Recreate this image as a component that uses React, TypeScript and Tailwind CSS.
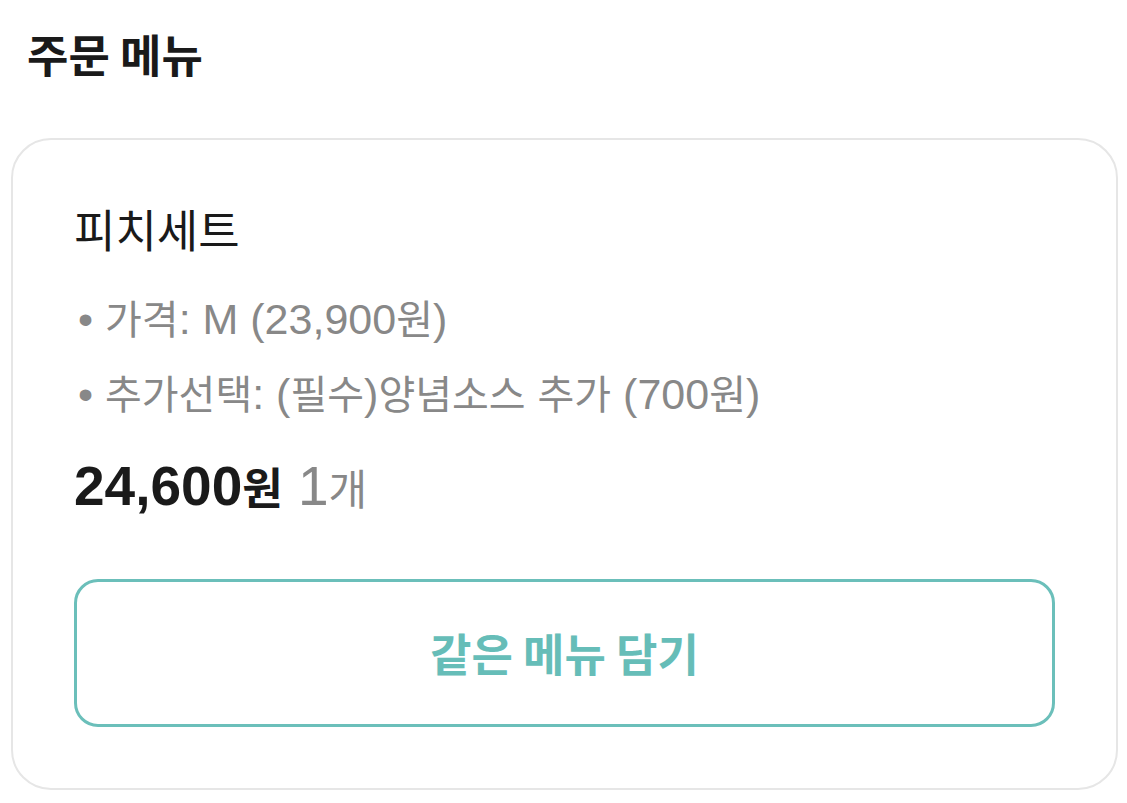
type MixedProps = { text: string; hangul: string; latin: string };

function Mixed({ text, hangul, latin }: MixedProps) {
  const parts = text.split(/([\uAC00-\uD7A3]+)/).filter((p) => p.length > 0);
  return (
    <>
      {parts.map((p, i) =>
        /[\uAC00-\uD7A3]/.test(p) ? (
          <span key={i} className={hangul}>
            {p}
          </span>
        ) : (
          <span key={i} className={latin}>
            {p}
          </span>
        )
      )}
    </>
  );
}

export default function App() {
  const hangulGray = "font-['Noto_Sans_CJK_KR',sans-serif] text-[40px]";
  const latinGray = "text-[43px]";
  return (
    <div className="w-[1127px] h-[803px] bg-white overflow-hidden font-['Liberation_Sans','Noto_Sans_CJK_KR',sans-serif]">
      <div className="pl-[27px] pt-[28px] h-[138px] font-['Noto_Sans_CJK_KR',sans-serif] text-[45px] leading-[52px] font-bold text-[#1a1a1a]">
        주문 메뉴
      </div>
      <div className="ml-[11px] w-[1107px] h-[652px] rounded-[40px] border-2 border-[#e6e6e6] px-[61px] pt-[59px] flex flex-col">
        <div className="font-['Noto_Sans_CJK_KR',sans-serif] text-[45px] leading-[60px] text-[#1a1a1a]">피치세트</div>
        <div className="mt-[28px] pl-[4px] text-[43px] leading-[60px] text-[#888888]">
          <Mixed text="• 가격: M (23,900원)" hangul={hangulGray} latin={latinGray} />
        </div>
        <div className="mt-[13px] pl-[4px] text-[43px] leading-[60px] text-[#888888]">
          <Mixed text="• 추가선택: (필수)양념소스 추가 (700원)" hangul={hangulGray} latin={latinGray} />
        </div>
        <div className="mt-[32px] text-[55px] leading-[60px]">
          <span className="font-bold text-[#1a1a1a]">
            24,600<span className="font-['Noto_Sans_CJK_KR',sans-serif] text-[44px]">원</span>
          </span>
          <span className="text-[#888888]">
            {" "}1<span className="font-['Noto_Sans_CJK_KR',sans-serif] text-[42px]">개</span>
          </span>
        </div>
        <div className="mt-[62px] h-[148px] rounded-[24px] border-[3px] border-[#6bbfba] flex items-center justify-center">
          <span className="font-['Noto_Sans_CJK_KR',sans-serif] text-[45px] leading-[60px] font-bold text-[#66bdb8]">
            같은 메뉴 담기
          </span>
        </div>
      </div>
    </div>
  );
}
